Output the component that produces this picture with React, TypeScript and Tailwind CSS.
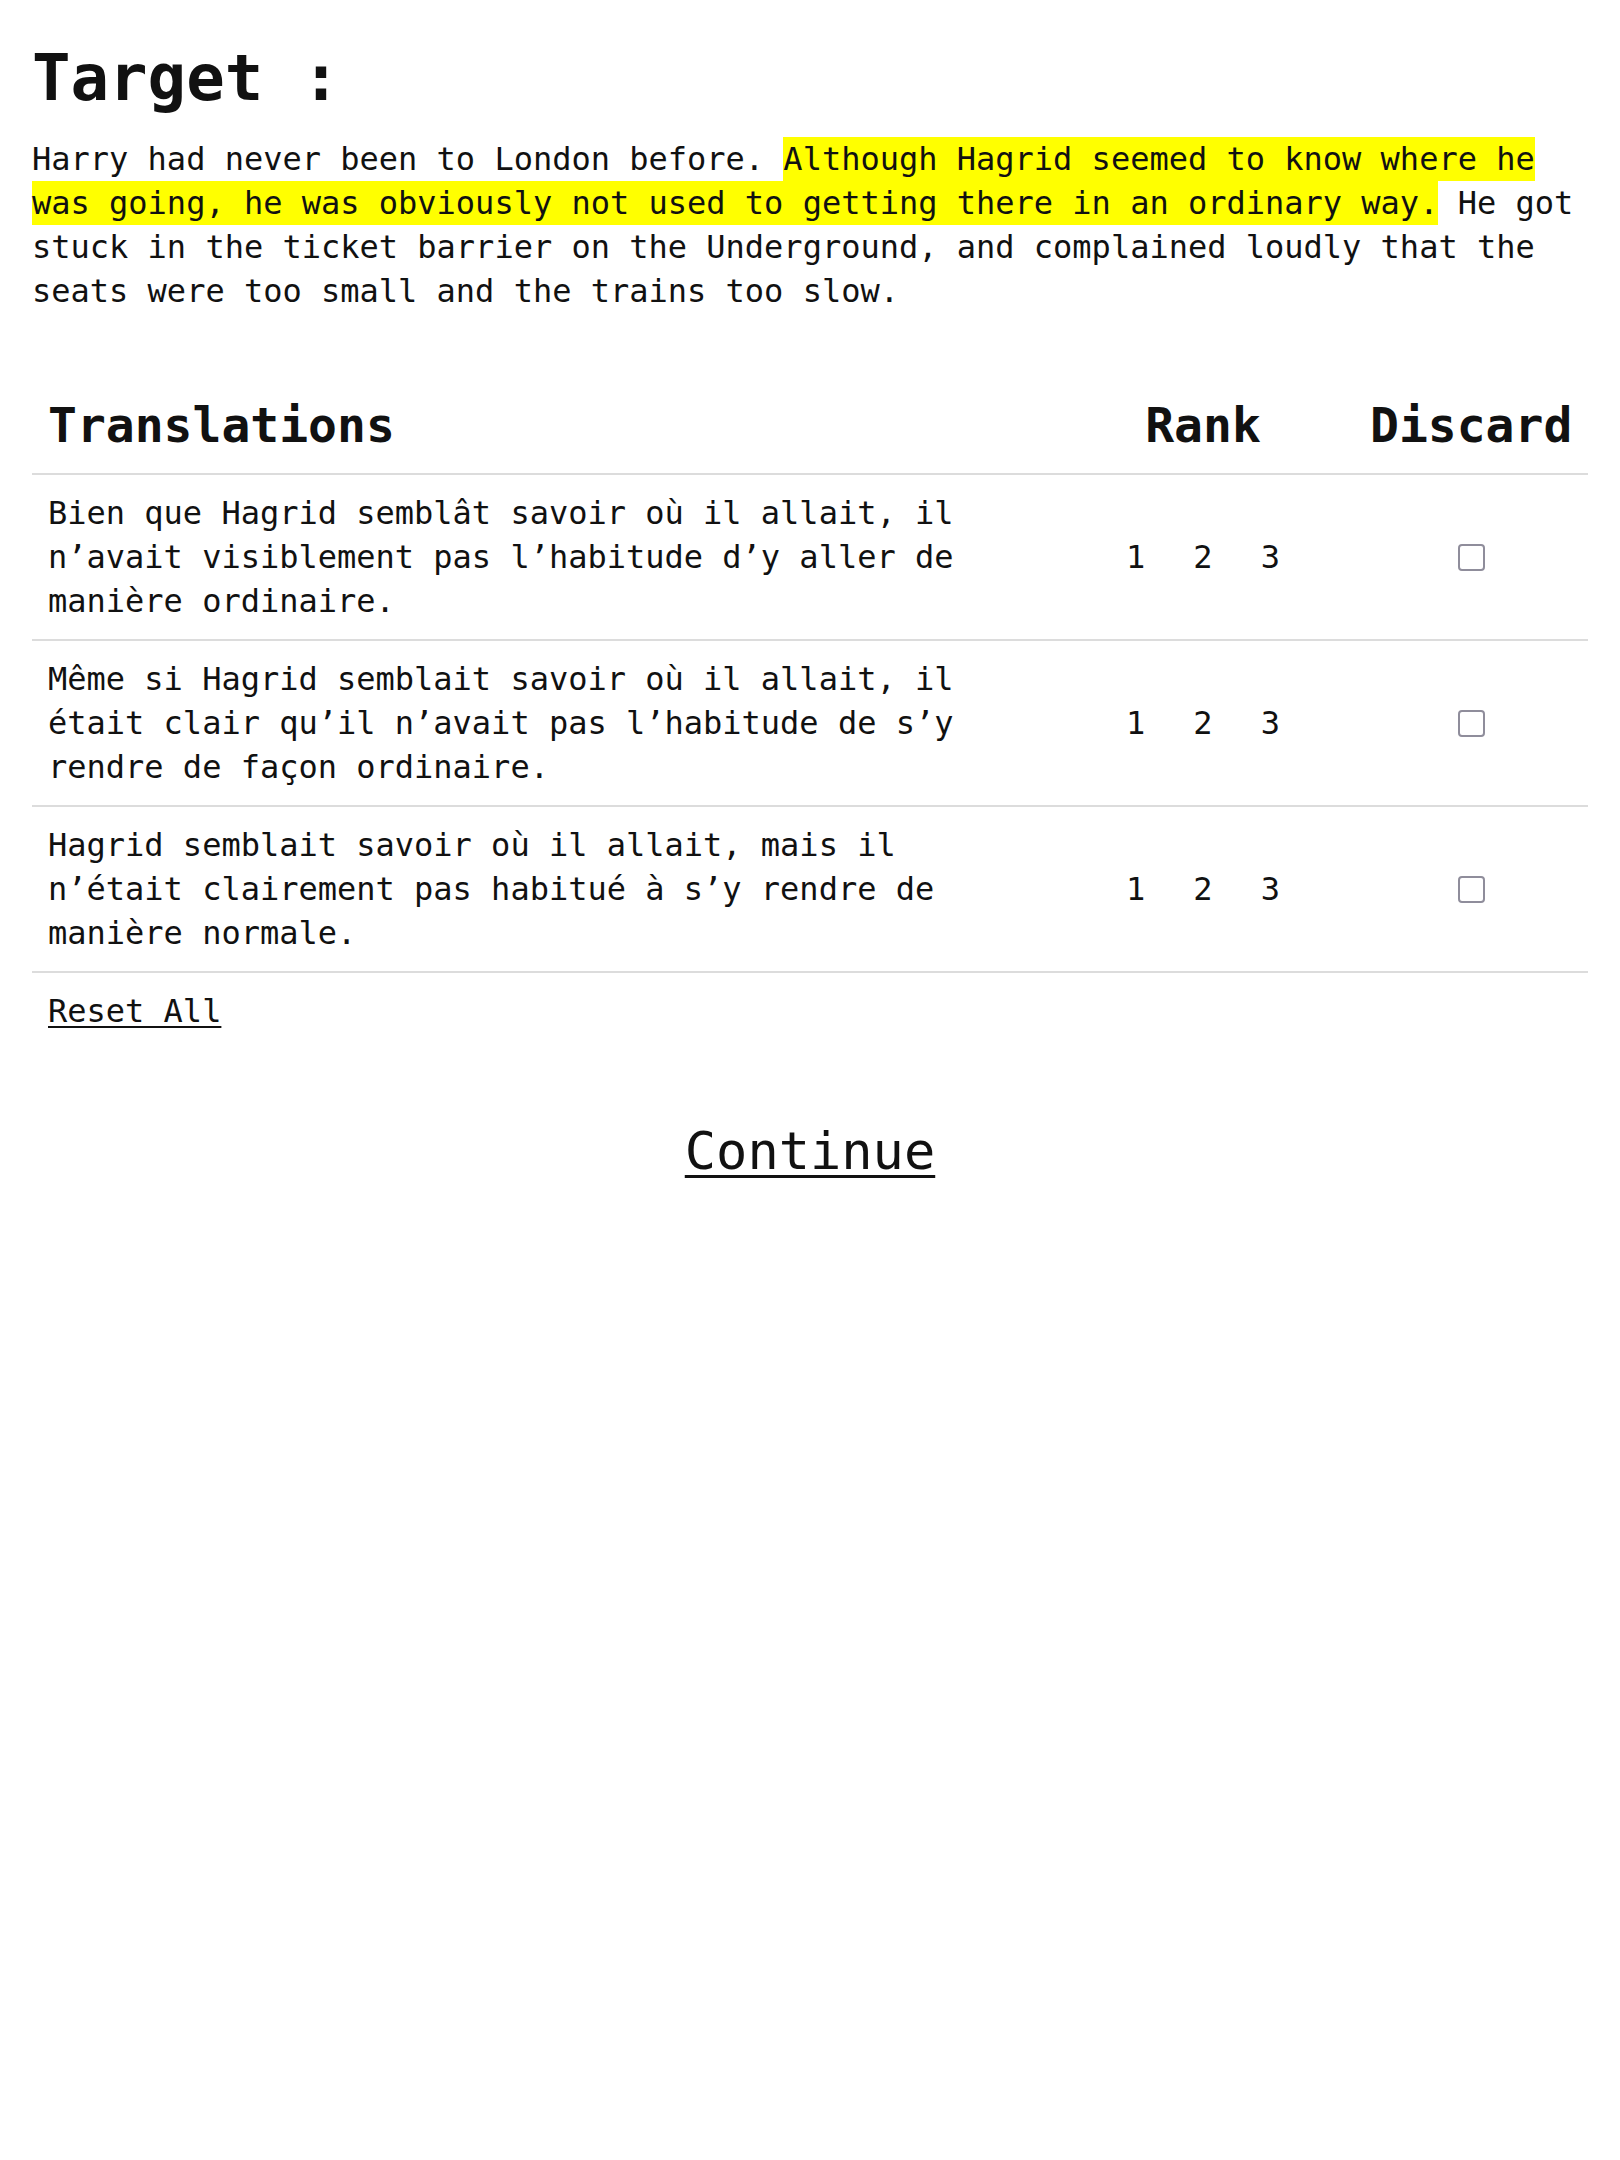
type Translation = {
    text: string;
};

const translations: Translation[] = [
    { text: "Bien que Hagrid semblât savoir où il allait, il n’avait visiblement pas l’habitude d’y aller de manière ordinaire." },
    { text: "Même si Hagrid semblait savoir où il allait, il était clair qu’il n’avait pas l’habitude de s’y rendre de façon ordinaire." },
    { text: "Hagrid semblait savoir où il allait, mais il n’était clairement pas habitué à s’y rendre de manière normale." },
];

const App = () => {
    return (
        <div
            className="min-h-[2160px] bg-white text-[#111] px-8 pt-[30px]"
            style={{ fontFamily: '"DejaVu Sans Mono", "Liberation Mono", monospace' }}
        >
            <h1 className="text-[64px] leading-[96px] font-bold">Target :</h1>
            <p className="mt-[11px] text-[32px] leading-[44px]">
                Harry had never been to London before.{" "}
                <span className="bg-[#ffff00] py-[3px] box-decoration-clone">
                    Although Hagrid seemed to know where he was going, he was obviously not used to getting there in an ordinary way.
                </span>{" "}
                He got stuck in the ticket barrier on the Underground, and complained loudly that the seats were too small and the trains too slow.
            </p>

            <div className="mt-[72px]">
                <div className="grid grid-cols-[1fr_302px_234px] border-b-2 border-[#dcdcdc] text-[48px] leading-[56px] font-bold">
                    <div className="px-4 pt-3 pb-5">Translations</div>
                    <div className="px-4 pt-3 pb-5 text-center">Rank</div>
                    <div className="px-4 pt-3 pb-5 text-center">Discard</div>
                </div>
                {translations.map((t, index) => (
                    <div className="grid grid-cols-[1fr_302px_234px] border-b-2 border-[#dcdcdc] text-[32px] leading-[44px]" key={index}>
                        <div className="px-4 py-4">{t.text}</div>
                        <div className="flex items-center justify-center">
                            {[1, 2, 3].map((n) => (
                                <button className="px-6 cursor-pointer" key={n}>{n}</button>
                            ))}
                        </div>
                        <div className="flex items-center justify-center">
                            <input
                                type="checkbox"
                                className="appearance-none w-[27px] h-[27px] border-2 border-[#8f8d9b] rounded-[4px] bg-white"
                            />
                        </div>
                    </div>
                ))}
                <div className="px-4 pt-4 text-[32px] leading-[44px]">
                    <button className="underline decoration-2 underline-offset-[4px] cursor-pointer">Reset All</button>
                </div>
            </div>

            <div className="mt-[79px] flex justify-center">
                <button className="text-[52px] leading-[78px] underline decoration-[3px] underline-offset-[6px] cursor-pointer">Continue</button>
            </div>
        </div>
    )
}

export default App
